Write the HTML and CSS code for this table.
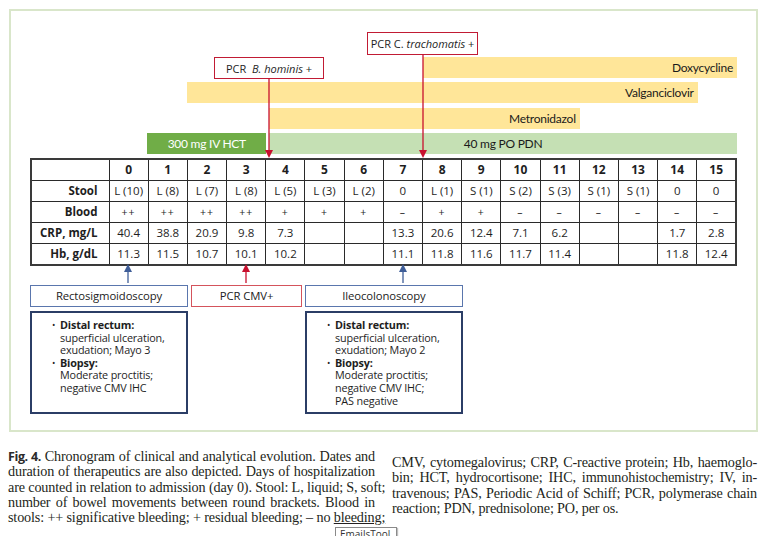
FILE: index.html
```html
<!DOCTYPE html>
<html lang="en">
<head>
<meta charset="utf-8">
<title>Fig. 4 Chronogram</title>
<link rel="stylesheet" href="styles.css">
</head>
<body>
<div class="frame">
  <div class="chart">
    <div class="bars">
      <div class="bar drug doxy">Doxycycline</div>
      <div class="bar drug valg">Valganciclovir</div>
      <div class="bar drug metro">Metronidazol</div>
      <div class="bar hct">300 mg IV HCT</div>
      <div class="bar pdn">40 mg PO PDN</div>
    </div>
    <table class="days">
      <colgroup><col class="c-label"></colgroup>
      <tr class="head">
        <th></th><th>0</th><th>1</th><th>2</th><th>3</th><th>4</th><th>5</th><th>6</th><th>7</th><th>8</th><th>9</th><th>10</th><th>11</th><th>12</th><th>13</th><th>14</th><th>15</th>
      </tr>
      <tr>
        <th>Stool</th><td>L (10)</td><td>L (8)</td><td>L (7)</td><td>L (8)</td><td>L (5)</td><td>L (3)</td><td>L (2)</td><td>0</td><td>L (1)</td><td>S (1)</td><td>S (2)</td><td>S (3)</td><td>S (1)</td><td>S (1)</td><td>0</td><td>0</td>
      </tr>
      <tr class="blood">
        <th>Blood</th><td>++</td><td>++</td><td>++</td><td>++</td><td>+</td><td>+</td><td>+</td><td>–</td><td>+</td><td>+</td><td>–</td><td>–</td><td>–</td><td>–</td><td>–</td><td>–</td>
      </tr>
      <tr>
        <th>CRP, mg/L</th><td>40.4</td><td>38.8</td><td>20.9</td><td>9.8</td><td>7.3</td><td></td><td></td><td>13.3</td><td>20.6</td><td>12.4</td><td>7.1</td><td>6.2</td><td></td><td></td><td>1.7</td><td>2.8</td>
      </tr>
      <tr>
        <th>Hb, g/dL</th><td>11.3</td><td>11.5</td><td>10.7</td><td>10.1</td><td>10.2</td><td></td><td></td><td>11.1</td><td>11.8</td><td>11.6</td><td>11.7</td><td>11.4</td><td></td><td></td><td>11.8</td><td>12.4</td>
      </tr>
    </table>
    <div class="findings">
      <div class="tag blue"><span>Rectosigmoidoscopy</span></div>
      <div class="tag red"><span>PCR CMV+</span></div>
      <div class="tag blue"><span>Ileocolonoscopy</span></div>
      <div class="detail">
        <ul>
          <li><b>Distal rectum:</b><br>superficial ulceration,<br>exudation; Mayo 3</li>
          <li><b>Biopsy:</b><br>Moderate proctitis;<br>negative CMV IHC</li>
        </ul>
      </div>
      <div class="spacer"></div>
      <div class="detail">
        <ul>
          <li><b>Distal rectum:</b><br>superficial ulceration,<br>exudation; Mayo 2</li>
          <li><b>Biopsy:</b><br>Moderate proctitis;<br>negative CMV IHC;<br>PAS negative</li>
        </ul>
      </div>
    </div>
    <div class="callout tracho"><span>PCR C. <i>trachomatis</i> +</span></div>
    <div class="callout homin"><span>PCR&nbsp; <i>B. hominis</i> +</span></div>
    <svg class="arrows" width="707" height="280" viewBox="0 0 707 280">
      <g fill="#c8102e" stroke="#c8102e">
        <line x1="239" y1="67" x2="239" y2="141" stroke-width="1.3"/>
        <polygon points="235,139 243,139 239,147" stroke="none"/>
        <line x1="393" y1="43" x2="393" y2="141" stroke-width="1.3"/>
        <polygon points="389,139 397,139 393,147" stroke="none"/>
        <line x1="216" y1="259" x2="216" y2="272" stroke-width="1.3"/>
        <polygon points="212,261 220,261 216,253" stroke="none"/>
      </g>
      <g fill="#3f5e98" stroke="#3f5e98">
        <line x1="98" y1="259" x2="98" y2="272" stroke-width="1.3"/>
        <polygon points="94,261 102,261 98,253" stroke="none"/>
        <line x1="373" y1="259" x2="373" y2="272" stroke-width="1.3"/>
        <polygon points="369,261 377,261 373,253" stroke="none"/>
      </g>
    </svg>
  </div>
</div>
<div class="caption">
  <div class="col left">
    <span class="ln"><b class="fig">Fig. 4.</b> Chronogram of clinical and analytical evolution. Dates and</span>
    <span class="ln">duration of therapeutics are also depicted. Days of hospitalization</span>
    <span class="ln">are counted in relation to admission (day 0). Stool: L, liquid; S, soft;</span>
    <span class="ln">number of bowel movements between round brackets. Blood in</span>
    <span class="ln">stools: ++ significative bleeding; + residual bleeding; – no <u>bleeding;</u></span>
  </div>
  <div class="col right">
    <span class="ln">CMV, cytomegalovirus; CRP, C-reactive protein; Hb, haemoglo-</span>
    <span class="ln">bin; HCT, hydrocortisone; IHC, immunohistochemistry; IV, in-</span>
    <span class="ln">travenous; PAS, Periodic Acid of Schiff; PCR, polymerase chain</span>
    <span class="ln last">reaction; PDN, prednisolone; PO, per os.</span>
  </div>
</div>
<div class="emailstool">EmailsTool</div>
</body>
</html>
```
FILE: styles.css
```css
html, body {
  margin: 0;
  padding: 0;
  background: #ffffff;
}
body {
  position: relative;
  width: 768px;
  height: 536px;
  overflow: hidden;
  color: #1e1e1e;
  font-family: "Open Sans", "Noto Sans", sans-serif;
}
.frame {
  box-sizing: border-box;
  width: 749px;
  height: 423px;
  margin: 9px 0 0 9px;
  border: 2px solid #d9e6ca;
  padding: 0 19px;
}
.chart {
  position: relative;
  width: 707px;
  padding-top: 46px;
}
.bars {
  display: grid;
  grid-template-columns: 78px repeat(16, 1fr);
  grid-auto-rows: 21px;
  row-gap: 4.33px;
  font-family: Lato, "Open Sans", sans-serif;
  font-size: 12px;
  letter-spacing: -0.25px;
}
.bar {
  display: flex;
  align-items: center;
  white-space: nowrap;
}
.drug {
  background: #ffe699;
  justify-content: flex-end;
  padding-right: 4px;
  color: #1a1a1a;
}
.doxy { grid-row: 1; grid-column: 10 / 18; }
.valg { grid-row: 2; grid-column: 4 / 17; }
.metro { grid-row: 3; grid-column: 6 / 14; margin-left: 4px; }
.hct {
  grid-row: 4;
  grid-column: 3 / 6;
  margin-right: -1px;
  background: #70ad47;
  color: #ffffff;
  justify-content: center;
}
.pdn {
  grid-row: 4;
  grid-column: 6 / 18;
  margin-left: 4px;
  background: #c5e0b4;
  color: #1a1a1a;
  justify-content: center;
}
.days {
  margin-top: 4px;
  width: 707px;
  table-layout: fixed;
  border-collapse: collapse;
  border: 2px solid #3a3a3a;
  font-size: 11.5px;
}
.days .c-label { width: 78px; }
.days th, .days td {
  height: 20px;
  padding: 0;
  border: 1px solid #2a2a2a;
  text-align: center;
  color: #1e1e1e;
}
.days td { font-weight: 400; }
.days .blood td { letter-spacing: 1px; font-size: 10.5px; }
.days th { font-weight: 700; font-size: 12px; }
.days tr th:first-child {
  text-align: right;
  padding-right: 11px;
  font-size: 11.5px;
}
.findings {
  margin-top: 19px;
  display: grid;
  grid-template-columns: 158px 111px 158px;
  grid-template-rows: 22px 103px;
  column-gap: 3px;
  row-gap: 4px;
  font-size: 11.3px;
}
.tag {
  box-sizing: border-box;
  display: flex;
  align-items: center;
  justify-content: center;
  border: 1.5px solid #5a76ad;
  color: #222;
  white-space: nowrap;
  letter-spacing: -0.1px;
}
.tag.red { border-color: #d4535c; }
.detail {
  box-sizing: border-box;
  border: 2px solid #2b3d66;
  padding-top: 6px;
  line-height: 12.6px;
  font-size: 10.8px;
  letter-spacing: -0.15px;
}
.detail ul {
  margin: 0;
  padding: 0 0 0 28px;
  list-style: none;
}
.detail li {
  position: relative;
}
.detail li::before {
  content: "\2022";
  position: absolute;
  left: -8px;
  top: 0;
  font-size: 9px;
}
.callout {
  position: absolute;
  box-sizing: border-box;
  display: flex;
  align-items: center;
  justify-content: center;
  background: #ffffff;
  border: 1.5px solid #c11b34;
  font-size: 11px;
  white-space: nowrap;
  color: #1e1e1e;
}
.tracho { left: 337px; top: 21px; width: 111px; height: 23px; }
.homin { left: 184px; top: 46px; width: 110px; height: 22px; }
.arrows {
  position: absolute;
  left: 0;
  top: 0;
  pointer-events: none;
}
.caption {
  display: flex;
  align-items: flex-start;
  justify-content: space-between;
  margin: 17px 11px 0 8px;
  font-family: "Liberation Serif", "Times New Roman", serif;
  font-size: 14.2px;
  line-height: 15.3px;
  letter-spacing: -0.15px;
  color: #231f20;
}
.col.left { width: 367px; }
.col.right { width: 365px; padding-top: 6px; }
.ln {
  display: block;
  height: 15.3px;
  white-space: nowrap;
  text-align: justify;
  text-align-last: justify;
}
.ln.last { text-align-last: left; }
.fig {
  font-family: "Open Sans", sans-serif;
  font-weight: 700;
  font-size: 12.5px;
  line-height: 10px;
  letter-spacing: -0.4px;
  color: #2a2a2a;
}
.emailstool {
  position: absolute;
  left: 335px;
  top: 527px;
  width: 62px;
  height: 14px;
  box-sizing: border-box;
  border: 1px solid #8a8a8a;
  background: #ffffff;
  box-shadow: 1px 1px 1px rgba(0,0,0,0.25);
  font-family: "Open Sans", sans-serif;
  font-size: 10px;
  line-height: 12px;
  padding-left: 4px;
  color: #333;
}
```
